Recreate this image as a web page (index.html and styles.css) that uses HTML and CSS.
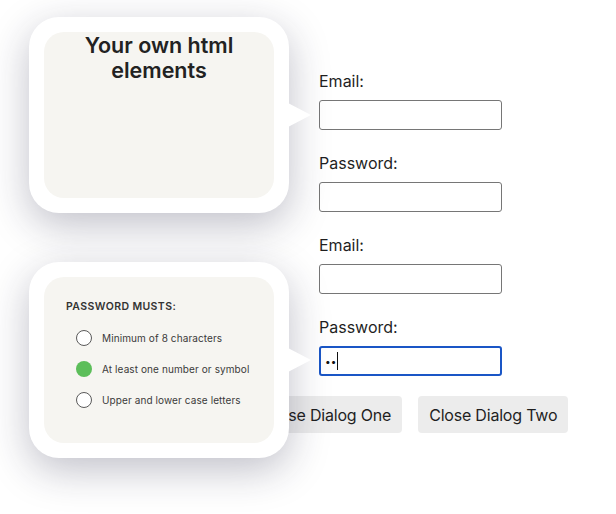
FILE: index.html
```html
<!DOCTYPE html>
<html lang="en">
<head>
<meta charset="utf-8">
<title>Popovers</title>
<link rel="stylesheet" href="styles.css">
</head>
<body>
<div class="page">
  <form class="form">
    <div class="fields">
      <div class="field">
        <label for="email1">Email:</label>
        <input id="email1" type="email">
      </div>
      <div class="field">
        <label for="pass1">Password:</label>
        <input id="pass1" type="password">
      </div>
      <div class="field">
        <label for="email2">Email:</label>
        <input id="email2" type="email">
      </div>
      <div class="field">
        <label for="pass2">Password:</label>
        <div class="fake-input focused"><span class="dots">••</span><span class="caret"></span></div>
      </div>
    </div>
    <div class="actions">
      <button type="button" class="btn">Close Dialog One</button>
      <button type="button" class="btn">Close Dialog Two</button>
    </div>
  </form>

  <div class="popover popover-one">
    <div class="popover-inner">
      <h2 class="title">Your own html elements</h2>
    </div>
  </div>

  <div class="popover popover-two">
    <div class="popover-inner musts">
      <h3 class="musts-title">PASSWORD MUSTS:</h3>
      <ul class="musts-list">
        <li class="must"><span class="dot"></span>Minimum of 8 characters</li>
        <li class="must"><span class="dot ok"></span>At least one number or symbol</li>
        <li class="must"><span class="dot"></span>Upper and lower case letters</li>
      </ul>
    </div>
  </div>
</div>
</body>
</html>
```

FILE: styles.css
```css
* { box-sizing: border-box; }
html, body { margin: 0; padding: 0; background: #fff; }
body {
  font-family: Inter, "Noto Sans", "Liberation Sans", sans-serif;
  color: #1f1f1f;
}
.page {
  position: relative;
  width: 616px;
  height: 514px;
  overflow: hidden;
}
.form {
  margin: 0 0 0 252px;
  width: 317px;
  padding-top: 71px;
  display: flex;
  flex-direction: column;
  align-items: center;
}
.fields {
  width: 183px;
  display: flex;
  flex-direction: column;
  gap: 23px;
}
.field label {
  display: block;
  font-size: 16px;
  line-height: 20px;
  margin-bottom: 9px;
  color: #1f1f1f;
}
.field input, .fake-input {
  display: block;
  width: 183px;
  height: 30px;
  margin: 0;
  border: 1px solid #767676;
  border-radius: 3px;
  background: #fff;
  font: inherit;
  padding: 0 5px;
}
.fake-input {
  display: flex;
  align-items: center;
}
.fake-input.focused {
  border: 2px solid #1a56c6;
  padding: 0 4px;
}
.dots {
  font-size: 10px;
  letter-spacing: 0;
  color: #111;
  line-height: 1;
}
.caret {
  width: 1px;
  height: 18px;
  background: #111;
  margin-left: 1px;
}
.actions {
  display: flex;
  flex: none;
  gap: 16px;
  margin-top: 20px;
}
.btn {
  flex: none;
  white-space: nowrap;
  height: 37px;
  padding: 0 11px;
  border: none;
  border-radius: 4px;
  background: #ececec;
  font: inherit;
  font-size: 16px;
  letter-spacing: -0.2px;
  color: #1f1f1f;
}

.popover {
  position: absolute;
  left: 29px;
  width: 260px;
  height: 196px;
  padding: 15px;
  background: #fff;
  border-radius: 30px;
  box-shadow: 0 12px 40px rgba(30, 30, 60, 0.28);
}
.popover::after {
  content: "";
  position: absolute;
  right: -22px;
  top: 50%;
  margin-top: -12px;
  border-left: 23px solid #fff;
  border-top: 12px solid transparent;
  border-bottom: 12px solid transparent;
}
.popover-one { top: 17px; }
.popover-two { top: 262px; }
.popover-inner {
  height: 100%;
  background: #f6f5f1;
  border-radius: 20px;
}
.title {
  margin: 0;
  padding-top: 1px;
  text-align: center;
  font-size: 21.5px;
  line-height: 25px;
  font-weight: 600;
  color: #222;
}
.musts {
  padding: 23px 22px;
}
.musts-title {
  margin: 0;
  font-size: 10.5px;
  line-height: 14px;
  font-weight: 600;
  letter-spacing: 0.4px;
  color: #333;
}
.musts-list {
  list-style: none;
  margin: 16px 0 0;
  padding: 0 0 0 10px;
  display: flex;
  flex-direction: column;
  gap: 15px;
}
.must {
  display: flex;
  align-items: center;
  gap: 10px;
  height: 16px;
  white-space: nowrap;
  font-size: 10px;
  letter-spacing: 0.1px;
  color: #3a3a3a;
}
.dot {
  width: 16px;
  height: 16px;
  border-radius: 50%;
  border: 1.5px solid #5a5a5a;
  background: #fff;
  flex: none;
}
.dot.ok {
  border: none;
  background: #5cbe5a;
}
```
